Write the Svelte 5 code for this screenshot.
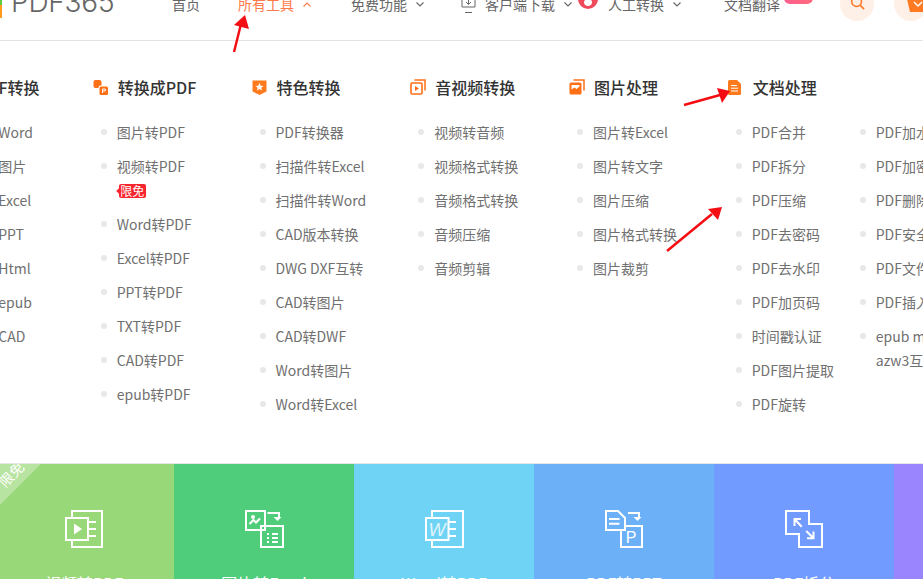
<script>
  const groups = [
    { title: "PDF转换", icon: "none", lists: [["PDF转Word", "PDF转图片", "PDF转Excel", "PDF转PPT", "PDF转Html", "PDF转epub", "PDF转CAD"]] },
    { title: "转换成PDF", icon: "pdf", lists: [["图片转PDF", "视频转PDF", "Word转PDF", "Excel转PDF", "PPT转PDF", "TXT转PDF", "CAD转PDF", "epub转PDF"]] },
    { title: "特色转换", icon: "shield", lists: [["PDF转换器", "扫描件转Excel", "扫描件转Word", "CAD版本转换", "DWG DXF互转", "CAD转图片", "CAD转DWF", "Word转图片", "Word转Excel"]] },
    { title: "音视频转换", icon: "video", lists: [["视频转音频", "视频格式转换", "音频格式转换", "音频压缩", "音频剪辑"]] },
    { title: "图片处理", icon: "image", lists: [["图片转Excel", "图片转文字", "图片压缩", "图片格式转换", "图片裁剪"]] },
    { title: "文档处理", icon: "doc", lists: [
      ["PDF合并", "PDF拆分", "PDF压缩", "PDF去密码", "PDF去水印", "PDF加页码", "时间戳认证", "PDF图片提取", "PDF旋转"],
      ["PDF加水印", "PDF加密", "PDF删除页面", "PDF安全设置", "PDF文件比较", "PDF插入页码", "epub mobi azw3互转"]
    ] }
  ];
  const cards = [
    { label: "视频转PDF", cls: "c1", icon: "video" },
    { label: "图片转Excel", cls: "c2", icon: "excel" },
    { label: "Word转PDF", cls: "c3", icon: "word" },
    { label: "PDF转PPT", cls: "c4", icon: "ppt" },
    { label: "PDF拆分", cls: "c5", icon: "split" },
    { label: "PDF转图片", cls: "c6", icon: "none" }
  ];
</script>

<div class="page">
  <header class="topbar">
    <div class="topbar-inner">
      <span class="logo-mark"></span>
      <span class="logo">PDF365</span>
      <nav class="nav">
        <span class="nav-item home">首页</span>
        <span class="nav-item tools active">所有工具
          <svg class="chev" viewBox="0 0 8 5"><polyline points="0.5,4.5 4,1 7.5,4.5" /></svg>
        </span>
        <span class="nav-item free">免费功能
          <svg class="chev" viewBox="0 0 8 5"><polyline points="0.5,0.5 4,4 7.5,0.5" /></svg>
        </span>
        <svg class="dl-icon" viewBox="0 0 15 30">
          <path d="M1 2V21H14V2M4 26.5H11M7.5 12V18M5 16L7.5 18.5L10 16" />
        </svg>
        <span class="nav-item client">客户端下载
          <svg class="chev" viewBox="0 0 8 5"><polyline points="0.5,0.5 4,4 7.5,0.5" /></svg>
        </span>
        <svg class="flame" viewBox="0 0 20 20">
          <circle cx="10" cy="10" r="10" fill="#ef4a5c" />
          <path d="M10 7C11 10 14 10 14 13.500C14 15.500 12 17 10 17C8 17 6 15.500 6 13.500C6 11.500 7.500 11 8 9.500C9 10 9.500 9 10 7Z" fill="#fff" />
        </svg>
        <span class="nav-item human">人工转换
          <svg class="chev" viewBox="0 0 8 5"><polyline points="0.5,0.5 4,4 7.5,0.5" /></svg>
        </span>
        <span class="nav-item translate">文档翻译</span>
        <span class="hot"></span>
      </nav>
      <span class="round search">
        <svg viewBox="0 0 16 16" class="search-icon"><circle cx="7" cy="7" r="5.200" /><path d="M11 11L15 15" /></svg>
      </span>
      <span class="round cart">
        <svg viewBox="0 0 22 16" class="cart-icon">
          <path d="M0 3H22L19 16H3Z" fill="#ff7a22" />
          <polyline points="7,6 11,10 15,6" fill="none" stroke="#fff" stroke-width="1.500" />
        </svg>
      </span>
    </div>
  </header>

  <section class="menu">
    {#each groups as g}
      <div class="group">
        <h3 class="group-title">
          <span class="gicon">
            {#if g.icon === "pdf"}
              <svg viewBox="0 0 15 15">
                <rect x="0.500" y="0" width="8" height="8" rx="2" fill="#ff6f16" />
                <rect x="5.500" y="5.500" width="9.500" height="9.500" rx="2" fill="#fff" />
                <rect x="6.500" y="6.500" width="8.500" height="8.500" rx="1.500" fill="#ff6f16" />
                <path d="M9.500 13V9H12.300V11H9.500" fill="none" stroke="#fff" stroke-width="1" />
              </svg>
            {:else if g.icon === "shield"}
              <svg viewBox="0 0 15 15">
                <path d="M0.500 0.500H14.500V11.500L7.500 15L0.500 11.500Z" fill="#ff7a1c" />
                <polygon points="7.500,2.800 8.700,5.700 11.500,5.900 9.300,7.700 10,10.500 7.500,9 5,10.500 5.700,7.700 3.500,5.900 6.300,5.700" fill="#fff" />
              </svg>
            {:else if g.icon === "video"}
              <svg class="big" viewBox="0 0 16 16">
                <path d="M4.500 1H15V11.500" fill="none" stroke="#ff6f16" stroke-width="1.500" />
                <rect x="1" y="4" width="11" height="11" rx="1" fill="none" stroke="#ff6f16" stroke-width="1.600" />
                <polygon points="5,7 9,9.500 5,12" fill="#ff6f16" />
              </svg>
            {:else if g.icon === "image"}
              <svg class="big" viewBox="0 0 16 16">
                <path d="M4.500 1H15V11.500" fill="none" stroke="#ff6f16" stroke-width="1.500" />
                <rect x="0.500" y="3.500" width="12" height="12" rx="1.500" fill="#ff6f16" />
                <path d="M2.500 10.500L5.500 8.500L7.500 10L10.500 7.500V6H2.500Z" fill="#fff" />
              </svg>
            {:else if g.icon === "doc"}
              <svg viewBox="0 0 13 15" preserveAspectRatio="xMinYMid">
                <path d="M1.500 0H9L13 4V13.500Q13 15 11.500 15H1.500Q0 15 0 13.500V1.500Q0 0 1.500 0Z" fill="#ff7a1c" />
                <path d="M3 5.500H9M3 8.200H10M3 11H10" stroke="#fff" stroke-width="1" />
              </svg>
            {/if}
          </span>
          {g.title}
        </h3>
        <div class="lists">
          {#each g.lists as list}
            <ul class="list">
              {#each list as item}
                <li class="item">
                  <span class="dot"></span>
                  <span class="item-text">{item}</span>
                  {#if item === "视频转PDF"}
                    <span class="tag">限免</span>
                  {/if}
                </li>
              {/each}
            </ul>
          {/each}
        </div>
      </div>
    {/each}
  </section>

  <section class="cards">
    {#each cards as c}
      <div class="card {c.cls}">
        {#if c.icon === "video"}
          <span class="ribbon"><span class="ribbon-text">限免</span></span>
        {/if}
        <svg class="card-icon" viewBox="0 0 40 40">
          {#if c.icon === "video"}
            <path d="M8 9V2H38V38H8V31M24 13H32M24 20H32M24 27H32" />
            <rect x="2" y="9" width="22" height="22" />
            <polygon class="solid" points="10,14.500 18,20 10,25.500" />
          {:else if c.icon === "excel"}
            <rect x="2" y="2" width="19" height="19" />
            <circle class="solid" cx="9" cy="8" r="2" />
            <path d="M5.500 15L9.500 11L12 13.500L16 9.500" />
            <path d="M23.500 4H35V9" />
            <polygon class="solid" points="29.500,8 37.500,8 33.500,12" />
            <rect x="17" y="17" width="22" height="21" />
            <path d="M23 25H25M28 25H34M23 29H25M28 29H34M23 33H25M28 33H34" />
          {:else if c.icon === "word"}
            <path d="M8 9V2H39V38H8V31M25 13H32M25 20H32M25 27H32" />
            <rect x="2" y="9" width="22.500" height="22" />
            <text class="letter" x="13" y="26.500">W</text>
          {:else if c.icon === "ppt"}
            <path d="M2 2H14L21 9V21H2Z" />
            <path d="M5 10H15.500M5 14.700H15.500" />
            <path d="M24 4H35V9" />
            <polygon class="solid" points="29.500,8 37.500,8 33.500,12" />
            <path d="M21 17H38V38H17V21" />
            <text class="letter plain" x="27" y="34">P</text>
          {:else if c.icon === "split"}
            <path d="M2 2H25V15H38V38H15V25H2Z" />
            <path d="M10.500 10L17.700 17.700M10.500 17V10H17" />
            <path d="M22.300 22L29.500 29.300M29.500 22.500V29.300H23" />
          {/if}
        </svg>
        <span class="card-label">{c.label}</span>
      </div>
    {/each}
  </section>

  <svg class="marks" viewBox="0 0 923 579">
    <line x1="234" y1="52" x2="241" y2="24" />
    <polygon points="245,15 234,25 249,29" />
    <line x1="684" y1="105" x2="720" y2="95" />
    <polygon points="730,91 717,88 722,103" />
    <line x1="667" y1="251" x2="712" y2="214" />
    <polygon points="722,207 708,209 718,220" />
  </svg>
</div>

<style>
  :global(body) {
    overflow: hidden;
  }

  .page {
    position: relative;
    width: 923px;
    height: 579px;
    overflow: hidden;
    background: #fff;
    font-family: "Noto Sans CJK SC", "Noto Sans", sans-serif;
    color: #666;
  }

  /* ========== Top bar (page is scrolled, so its top is cut off) ========== */
  .topbar {
    height: 40px;
    box-sizing: content-box;
    overflow: hidden;
    border-bottom: 1px solid #e2e2e2;
  }

  .topbar-inner {
    display: flex;
    align-items: center;
    height: 42px;
    margin-top: -17px;
  }

  .logo-mark {
    flex: none;
    align-self: flex-start;
    width: 2px;
    height: 35px;
    background: linear-gradient(#5ecb3f 0 62%, #ff9c1a 62%);
  }

  .logo {
    flex: none;
    width: 161px;
    margin-top: -4px;
    margin-left: 9px;
    font-family: Inter, sans-serif;
    font-weight: 300;
    font-size: 28px;
    line-height: 42px;
    letter-spacing: -0.2px;
    color: #666;
  }

  .nav {
    display: flex;
    align-items: center;
    flex: none;
    width: 668px;
    font-size: 14px;
    line-height: 20px;
    color: #666;
    white-space: nowrap;
  }

  .nav-item {
    display: flex;
    align-items: center;
    flex: none;
  }

  .nav-item.active {
    color: #ff7a4a;
  }

  .home { width: 66px; }
  .tools { width: 113px; }
  .free { width: 110px; }
  .client { width: 93px; margin-left: 9px; }
  .human { width: 116px; margin-left: 10px; }
  .translate { width: 60px; }

  .chev {
    flex: none;
    width: 8px;
    height: 5px;
    margin-left: 9px;
    fill: none;
    stroke: #666;
    stroke-width: 1.100;
  }

  .tools .chev {
    stroke: #ff7a4a;
  }

  .dl-icon {
    flex: none;
    width: 15px;
    height: 30px;
    margin-top: -6px;
    fill: none;
    stroke: #666;
    stroke-width: 1;
  }

  .flame {
    flex: none;
    width: 20px;
    height: 20px;
    margin-top: -11px;
  }

  .hot {
    flex: none;
    width: 29px;
    height: 16px;
    margin-top: -16px;
    border-radius: 0 0 6px 6px;
    background: linear-gradient(90deg, #ff5d8f, #ff6a7c);
  }

  .round {
    display: flex;
    flex: none;
    align-items: center;
    justify-content: center;
    width: 34px;
    height: 34px;
    border-radius: 50%;
    background: #fef0e6;
  }

  .cart {
    justify-content: flex-start;
    margin-left: 20px;
    padding-left: 13px;
    box-sizing: border-box;
    overflow: visible;
  }

  .search-icon {
    width: 15px;
    height: 15px;
    margin-top: -3px;
    fill: none;
    stroke: #ff7a2a;
    stroke-width: 1.700;
  }

  .cart-icon {
    flex: none;
    width: 22px;
    height: 16px;
    margin-top: -1px;
  }

  /* ========== Mega menu ========== */
  .menu {
    display: flex;
    height: 423px;
    box-sizing: border-box;
    margin-left: -66px;
    padding-top: 34px;
    border-bottom: 1px solid #e6e6e6;
  }

  .group {
    flex: none;
    width: 158.750px;
  }

  .group-title {
    display: flex;
    align-items: center;
    height: 24px;
    margin: 0 0 16px;
    font-size: 16px;
    font-weight: 500;
    line-height: 24px;
    color: #333;
    white-space: nowrap;
  }

  .gicon {
    display: flex;
    flex: none;
    width: 25px;
  }

  /* first heading has no icon in view, its title sits further right */
  .group:first-child .gicon {
    width: 43px;
  }

  .gicon svg {
    display: block;
    width: 15px;
    height: 15px;
  }

  .gicon svg.big {
    width: 16px;
    height: 16px;
  }

  .lists {
    display: flex;
  }

  .list {
    flex: none;
    width: 124px;
    margin: 0;
    padding: 0;
    list-style: none;
  }

  .item {
    position: relative;
    display: block;
    padding: 5px 0 5px 24px;
    font-size: 14px;
    line-height: 24px;
    color: #707070;
  }

  .item-text {
    display: block;
    max-width: 100px;
  }

  .group:first-child .item-text {
    max-width: none;
  }

  .dot {
    position: absolute;
    top: 14px;
    left: 8px;
    width: 6px;
    height: 6px;
    border-radius: 50%;
    background: #e8e8e8;
  }

  .tag {
    position: relative;
    display: block;
    width: 27px;
    height: 14px;
    margin: 6px 0 4px 2px;
    border-radius: 2px;
    background: #f7252d;
    font-size: 12px;
    line-height: 14px;
    text-align: center;
    color: #fff;
  }

  .tag::before {
    content: "";
    position: absolute;
    top: 5px;
    left: -2px;
    width: 4px;
    height: 4px;
    background: #f7252d;
    transform: rotate(45deg);
  }

  /* ========== Colour cards ========== */
  .cards {
    display: flex;
    height: 115px;
    margin-left: -6px;
  }

  .card {
    position: relative;
    display: flex;
    flex: none;
    flex-direction: column;
    align-items: center;
    width: 180px;
    padding-top: 45px;
    box-sizing: border-box;
    overflow: hidden;
    color: #fff;
  }

  .c1 { background: #98d878; }
  .c2 { background: #4fcd7a; }
  .c3 { background: #6fd3f5; }
  .c4 { background: #6cb1f8; }
  .c5 { background: #719bfe; }
  .c6 { background: #9a85ff; }

  .ribbon {
    position: absolute;
    top: 0;
    left: 0;
    width: 47px;
    height: 47px;
    background: rgba(255, 255, 255, 0.3);
    clip-path: polygon(0 0, 100% 0, 0 100%);
  }

  .ribbon-text {
    position: absolute;
    top: 2px;
    left: 1px;
    width: 32px;
    font-size: 14px;
    line-height: 16px;
    text-align: center;
    color: #fff;
    transform: rotate(-45deg);
    white-space: nowrap;
  }

  .card-icon {
    display: block;
    flex: none;
    width: 40px;
    height: 40px;
    fill: none;
    stroke: #fff;
    stroke-width: 2;
  }

  .card-icon .solid {
    fill: #fff;
    stroke: none;
  }

  .card-icon .letter {
    fill: rgba(255, 255, 255, 0.8);
    stroke: none;
    font-family: "Liberation Sans", sans-serif;
    font-size: 18px;
    font-style: italic;
    text-anchor: middle;
  }

  .card-icon .letter.plain {
    fill: #fff;
    font-size: 16px;
    font-style: normal;
  }

  .card-label {
    margin-top: 22px;
    font-size: 16px;
    line-height: 24px;
    white-space: nowrap;
  }

  /* red arrows drawn on top of the screenshot */
  .marks {
    position: absolute;
    top: 0;
    left: 0;
    width: 923px;
    height: 579px;
    pointer-events: none;
  }

  .marks line {
    stroke: #f40d12;
    stroke-width: 2.500;
  }

  .marks polygon {
    fill: #f40d12;
  }
</style>
